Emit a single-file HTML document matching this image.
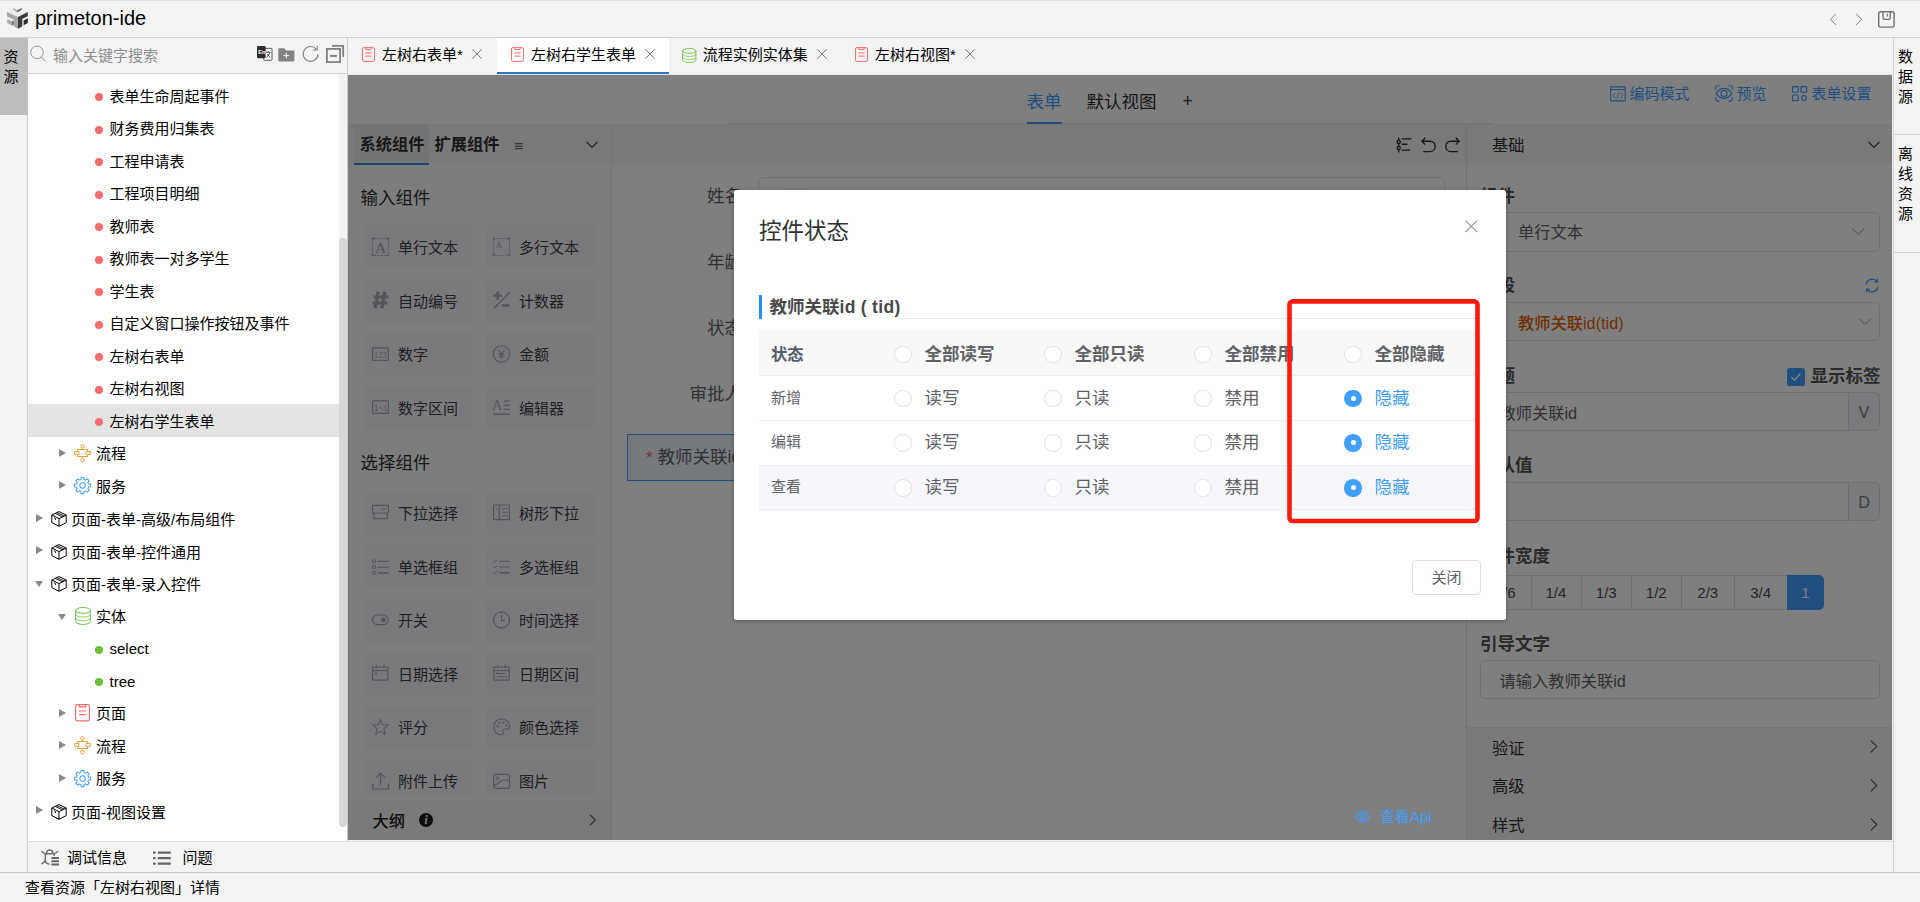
<!DOCTYPE html>
<html lang="zh-CN">
<head>
<meta charset="utf-8">
<title>primeton-ide</title>
<style>
*{box-sizing:border-box;margin:0;padding:0}
html,body{width:1920px;height:902px;overflow:hidden;background:#f3f3f3}
body{position:relative;font-family:"Liberation Sans","Noto Sans CJK SC",sans-serif;font-size:15px;color:#000;line-height:1}
.abs{position:absolute}
svg{display:block;position:absolute;overflow:visible}
.t{position:absolute;white-space:nowrap}
/* title */
#titlebar{left:0;top:0;width:1920px;height:38px;background:#f3f3f3;border-top:1px solid #e2e2e2;border-bottom:1px solid #d2d2d2}
#title{left:35px;top:5px;font-size:20px;line-height:24px;color:#000}
/* left strip */
#lstrip{left:0;top:38px;width:28px;height:835px;border-right:1px solid #d0d0d0;background:#f3f3f3}
#lstrip .sel{left:0;top:0;width:28px;height:77px;background:#bdbdbd}
.vtxt{position:absolute;width:15px;font-size:15px;line-height:20px;text-align:center;color:#000}
/* left panel */
#lpanel{left:28px;top:38px;width:320px;height:803px;background:#fff;border-right:1px solid #cacaca}
#search{left:0;top:0;width:319px;height:36px;background:#f3f3f3;border-bottom:1px solid #d4d4d4}
#tree{left:0;top:36px;width:311px;height:767px;overflow:hidden}
.row{position:absolute;left:0;width:311px;height:32.5px}
.row.on{background:#e4e4e4}
.row .t{top:8.5px;font-size:15px;line-height:17px}
.dot{position:absolute;width:8px;height:8px;border-radius:50%;top:13.75px}
.dot.r{background:#f56c6c}.dot.g{background:#67c23a}
.arr{position:absolute;width:0;height:0}
.arr.c{border-left:7px solid #8a8a8a;border-top:4.75px solid transparent;border-bottom:4.75px solid transparent;top:11.75px}
.arr.o{border-top:6.5px solid #8a8a8a;border-left:4.75px solid transparent;border-right:4.75px solid transparent;top:14.5px}
#sbar{left:311px;top:36px;width:8px;height:767px;background:#fff}
#sbar i{position:absolute;left:0;top:0;width:8px;height:170px;background:#f4f4f4}
#sbar b{position:absolute;left:0.2px;top:164px;width:7.4px;height:588.7px;background:#d7d7d7;border-radius:4px}
/* tabs */
#tabs{left:347px;top:38px;width:1546px;height:37px;background:#f3f3f3;border-left:1px solid #cacaca;border-bottom:1px solid #e4e4e4}
.tab{position:absolute;top:0;height:36px}
.tab.on{background:#fff;border-bottom:2px solid #2c75c5;height:36px}
.tab .t{top:7.5px;font-size:15px;line-height:17px}
/* main */
#main{left:348px;top:75px;width:1544px;height:765px;background:#fff;overflow:hidden}
#ov{left:0;top:0;width:1544px;height:765px;background:rgba(0,0,0,.5)}
.pbtn{position:absolute;width:108.5px;background:#f4f5fb;border-radius:5px;overflow:hidden}
.pbtn .t{font-size:15px;line-height:17px;color:#3e4046}
/* right strip */
#rstrip{left:1893px;top:38px;width:27px;height:835px;border-left:1px solid #d0d0d0;background:#f3f3f3}
/* bottom */
#bbar{left:28px;top:841px;width:1865px;height:32px;background:#f3f3f3;border-top:1px solid #dcdcdc}
#status{left:0;top:872px;width:1920px;height:30px;background:#f3f3f3;border-top:1px solid #c8c8c8}
</style>
</head>
<body>
<!-- TITLE BAR -->
<div id="titlebar" class="abs">
  <svg style="left:0;top:-1px" width="34" height="36" viewBox="0 0 34 36">
    <polygon points="7,12 17.5,6.6 27.8,12 18,17" fill="#ededed"/>
    <polygon points="13,8 17.3,10.2 17.3,12.7 13,9.3" fill="#b2b2b2"/>
    <polygon points="17.3,10.2 21.8,8 21.8,9.4 17.4,12.6" fill="#5e5e5e"/>
    <polygon points="7,12 18,17 18,28.7 13.7,26.3 13.7,19.7 7,16.4" fill="#a8a8a8"/>
    <polygon points="7.2,19 12.2,21.3 12.2,25.7 7.2,23" fill="#adadad"/>
    <polygon points="12.2,21.3 13.7,20.5 13.7,24.6 12.2,25.7" fill="#5c5c5c"/>
    <polygon points="18,17 27.8,12 27.8,16.3 22,19 22,26.4 18,28.7" fill="#3d3d3d"/>
    <polygon points="22,19.4 24,20.3 24,25.1 22,26.2" fill="#b4b4b4"/>
    <polygon points="24,20.3 27.8,18.3 27.8,23 24,25.1" fill="#2b2b2b"/>
  </svg>
  <div id="title" class="t">primeton-ide</div>
  <svg style="left:1828px;top:10px" width="70" height="18" viewBox="0 0 70 18" fill="none" stroke="#858585" stroke-width="1">
    <path d="M8 2.8 L2.4 8.4 L8 14"/>
    <path d="M28 2.8 L33.8 8.4 L28 14"/>
    <rect x="50.7" y="0.7" width="15.4" height="15.4" rx="2" stroke="#6e6e6e" stroke-width="1.4"/>
    <path d="M55 0.9 V7 Q55 8.4 56.4 8.4 H60.8 Q62.2 8.4 62.2 7 V0.9" stroke="#6e6e6e" stroke-width="1.3"/>
    <path d="M59.3 2.8 V5.6" stroke="#6e6e6e" stroke-width="1.1"/>
  </svg>
</div>

<!-- LEFT STRIP -->
<div id="lstrip" class="abs">
  <div class="sel abs"></div>
  <div class="vtxt" style="left:3.5px;top:9px">资源</div>
</div>

<!-- LEFT PANEL -->
<div id="lpanel" class="abs">
  <div id="search" class="abs">
    <svg style="left:2px;top:7px" width="18" height="18" viewBox="0 0 18 18" fill="none" stroke="#949494" stroke-width="1"><circle cx="7" cy="7.4" r="6.3"/><path d="M11.4 12 L15.8 16.6"/></svg>
    <div class="t" style="left:25px;top:8.5px;font-size:15px;line-height:17px;color:#8e8e8e">输入关键字搜索</div>
    <!-- translate -->
    <svg style="left:229px;top:8px" width="16" height="15" viewBox="0 0 16 15">
      <rect x="6.8" y="2.3" width="8.2" height="12" rx="0.8" fill="#fff" stroke="#444" stroke-width="0.9"/>
      <path d="M9 6.3 H13.4 M11.2 5 V6.3 M9.6 11.6 L12.8 6.8 M10 8 L13.4 11.8" stroke="#333" stroke-width="0.8" fill="none"/>
      <rect x="0" y="0" width="8.6" height="12.3" rx="1.2" fill="#2e2e2e"/>
      <text x="1.2" y="8" font-family="Liberation Sans,sans-serif" font-size="5.6" font-weight="bold" fill="#fff">En</text>
    </svg>
    <!-- folder add -->
    <svg style="left:250px;top:9.5px" width="17" height="14" viewBox="0 0 17 14">
      <path d="M0.3 1 Q0.3 0.3 1 0.3 H6 L8.2 2.6 H15.6 Q16.4 2.6 16.4 3.4 V12.6 Q16.4 13.4 15.6 13.4 H1 Q0.3 13.4 0.3 12.6 Z" fill="#828282"/>
      <path d="M8.3 4.8 V10.4 M5.5 7.6 H11.1" stroke="#fff" stroke-width="1"/>
    </svg>
    <!-- refresh -->
    <svg style="left:274px;top:7px" width="18" height="18" viewBox="0 0 18 18" fill="none" stroke="#808080" stroke-width="1.1">
      <path d="M16 9.2 A7.4 7.4 0 1 1 14.3 4.2"/>
      <path d="M15.2 0.8 V5 H10.8"/>
    </svg>
    <!-- collapse -->
    <svg style="left:297px;top:7px" width="20" height="19" viewBox="0 0 20 19" fill="none" stroke="#808080">
      <path d="M7 0.9 H18.2 V12" stroke-width="1.8"/>
      <rect x="1.9" y="3.9" width="13.2" height="13.2" stroke-width="1.8"/>
      <path d="M5 10.9 H12" stroke-width="2"/>
    </svg>
  </div>
  <div id="tree" class="abs">
    <div class="row" style="top:5.25px"><span class="dot r" style="left:67px"></span><span class="t" style="left:81.5px">表单生命周起事件</span></div>
    <div class="row" style="top:37.75px"><span class="dot r" style="left:67px"></span><span class="t" style="left:81.5px">财务费用归集表</span></div>
    <div class="row" style="top:70.25px"><span class="dot r" style="left:67px"></span><span class="t" style="left:81.5px">工程申请表</span></div>
    <div class="row" style="top:102.75px"><span class="dot r" style="left:67px"></span><span class="t" style="left:81.5px">工程项目明细</span></div>
    <div class="row" style="top:135.25px"><span class="dot r" style="left:67px"></span><span class="t" style="left:81.5px">教师表</span></div>
    <div class="row" style="top:167.75px"><span class="dot r" style="left:67px"></span><span class="t" style="left:81.5px">教师表一对多学生</span></div>
    <div class="row" style="top:200.25px"><span class="dot r" style="left:67px"></span><span class="t" style="left:81.5px">学生表</span></div>
    <div class="row" style="top:232.75px"><span class="dot r" style="left:67px"></span><span class="t" style="left:81.5px">自定义窗口操作按钮及事件</span></div>
    <div class="row" style="top:265.25px"><span class="dot r" style="left:67px"></span><span class="t" style="left:81.5px">左树右表单</span></div>
    <div class="row" style="top:297.75px"><span class="dot r" style="left:67px"></span><span class="t" style="left:81.5px">左树右视图</span></div>
    <div class="row on" style="top:330.25px"><span class="dot r" style="left:67px"></span><span class="t" style="left:81.5px">左树右学生表单</span></div>
    <div class="row" style="top:362.75px"><span class="arr c" style="left:31px"></span><svg style="left:45.7px;top:7px" width="17" height="19" viewBox="0 0 17 19" fill="none" stroke="#e6a23c" stroke-width="1"><circle cx="8.5" cy="2.3" r="1.7"/><path d="M8.5 4 V5.5 M8.5 12.5 V14.6"/><rect x="3.3" y="5.5" width="10.4" height="7"/><rect x="0.7" y="7.6" width="4.2" height="2.8" fill="#fff"/><rect x="12.1" y="7.6" width="4.2" height="2.8" fill="#fff"/><circle cx="8.5" cy="16.3" r="1.7"/></svg><span class="t" style="left:68px">流程</span></div>
    <div class="row" style="top:395.25px"><span class="arr c" style="left:31px"></span><svg style="left:46px;top:8px" width="17" height="17" viewBox="0 0 17 17" fill="none" stroke="#409eff" stroke-width="1.05" stroke-linejoin="round"><path d="M6.93 2.40 L7.22 0.40 L9.78 0.40 L10.07 2.40 L11.71 3.08 L13.32 1.87 L15.13 3.68 L13.92 5.29 L14.60 6.93 L16.60 7.22 L16.60 9.78 L14.60 10.07 L13.92 11.71 L15.13 13.32 L13.32 15.13 L11.71 13.92 L10.07 14.60 L9.78 16.60 L7.22 16.60 L6.93 14.60 L5.29 13.92 L3.68 15.13 L1.87 13.32 L3.08 11.71 L2.40 10.07 L0.40 9.78 L0.40 7.22 L2.40 6.93 L3.08 5.29 L1.87 3.68 L3.68 1.87 L5.29 3.08 Z"/><circle cx="8.5" cy="8.5" r="2.7"/></svg><span class="t" style="left:68px">服务</span></div>
    <div class="row" style="top:427.75px"><span class="arr c" style="left:8px"></span><svg style="left:22.5px;top:9.5px" width="16" height="16" viewBox="0 0 16 16" fill="none" stroke="#000" stroke-width="1" stroke-linejoin="round"><path d="M8 0.6 L15.2 4 V11.6 L8 15.3 L0.8 11.6 V4 Z"/><path d="M0.8 4 L8 7.6 L15.2 4 M8 7.6 V15.3"/><path d="M4.2 2.4 L11.6 5.9 M5.9 1.6 L13.3 5.1" stroke-width="0.9"/><path d="M3 6.8 L4.6 7.6 V9" stroke-width="0.9"/></svg><span class="t" style="top:9.5px;left:43px">页面-表单-高级/布局组件</span></div>
    <div class="row" style="top:460.25px"><span class="arr c" style="left:8px"></span><svg style="left:22.5px;top:9.5px" width="16" height="16" viewBox="0 0 16 16" fill="none" stroke="#000" stroke-width="1" stroke-linejoin="round"><path d="M8 0.6 L15.2 4 V11.6 L8 15.3 L0.8 11.6 V4 Z"/><path d="M0.8 4 L8 7.6 L15.2 4 M8 7.6 V15.3"/><path d="M4.2 2.4 L11.6 5.9 M5.9 1.6 L13.3 5.1" stroke-width="0.9"/><path d="M3 6.8 L4.6 7.6 V9" stroke-width="0.9"/></svg><span class="t" style="top:9.5px;left:43px">页面-表单-控件通用</span></div>
    <div class="row" style="top:492.75px"><span class="arr o" style="left:6.5px"></span><svg style="left:22.5px;top:9.5px" width="16" height="16" viewBox="0 0 16 16" fill="none" stroke="#000" stroke-width="1" stroke-linejoin="round"><path d="M8 0.6 L15.2 4 V11.6 L8 15.3 L0.8 11.6 V4 Z"/><path d="M0.8 4 L8 7.6 L15.2 4 M8 7.6 V15.3"/><path d="M4.2 2.4 L11.6 5.9 M5.9 1.6 L13.3 5.1" stroke-width="0.9"/><path d="M3 6.8 L4.6 7.6 V9" stroke-width="0.9"/></svg><span class="t" style="top:9.5px;left:43px">页面-表单-录入控件</span></div>
    <div class="row" style="top:525.25px"><span class="arr o" style="left:29.5px"></span><svg style="left:46.7px;top:8px" width="16" height="18" viewBox="0 0 16 18" preserveAspectRatio="none" fill="none" stroke="#67c23a" stroke-width="1"><ellipse cx="8" cy="3.4" rx="7.3" ry="2.9"/><path d="M0.7 3.4 V14.4 C0.7 16.2 4 17.4 8 17.4 C12 17.4 15.3 16.2 15.3 14.4 V3.4"/><path d="M0.7 7.2 C0.7 9 4 10.1 8 10.1 C12 10.1 15.3 9 15.3 7.2" stroke-opacity="0.75"/><path d="M0.7 10.9 C0.7 12.7 4 13.8 8 13.8 C12 13.8 15.3 12.7 15.3 10.9" stroke-opacity="0.75"/></svg><span class="t" style="left:68px">实体</span></div>
    <div class="row" style="top:557.75px"><span class="dot g" style="left:67px"></span><span class="t" style="left:81.5px">select</span></div>
    <div class="row" style="top:590.25px"><span class="dot g" style="left:67px"></span><span class="t" style="left:81.5px">tree</span></div>
    <div class="row" style="top:622.75px"><span class="arr c" style="left:31px"></span><svg style="left:47px;top:7.5px" width="15" height="17.75" viewBox="0 0 13 16" preserveAspectRatio="none" fill="none" stroke="#f56c6c" stroke-width="1"><rect x="0.5" y="0.6" width="12" height="14.6" rx="1.6"/><path d="M3.8 0.8 V2.6 H9.2 V0.8"/><path d="M3.3 6.3 H9.7 M3.3 9.6 H9.7"/></svg><span class="t" style="left:68px">页面</span></div>
    <div class="row" style="top:655.25px"><span class="arr c" style="left:31px"></span><svg style="left:45.7px;top:7px" width="17" height="19" viewBox="0 0 17 19" fill="none" stroke="#e6a23c" stroke-width="1"><circle cx="8.5" cy="2.3" r="1.7"/><path d="M8.5 4 V5.5 M8.5 12.5 V14.6"/><rect x="3.3" y="5.5" width="10.4" height="7"/><rect x="0.7" y="7.6" width="4.2" height="2.8" fill="#fff"/><rect x="12.1" y="7.6" width="4.2" height="2.8" fill="#fff"/><circle cx="8.5" cy="16.3" r="1.7"/></svg><span class="t" style="left:68px">流程</span></div>
    <div class="row" style="top:687.75px"><span class="arr c" style="left:31px"></span><svg style="left:46px;top:8px" width="17" height="17" viewBox="0 0 17 17" fill="none" stroke="#409eff" stroke-width="1.05" stroke-linejoin="round"><path d="M6.93 2.40 L7.22 0.40 L9.78 0.40 L10.07 2.40 L11.71 3.08 L13.32 1.87 L15.13 3.68 L13.92 5.29 L14.60 6.93 L16.60 7.22 L16.60 9.78 L14.60 10.07 L13.92 11.71 L15.13 13.32 L13.32 15.13 L11.71 13.92 L10.07 14.60 L9.78 16.60 L7.22 16.60 L6.93 14.60 L5.29 13.92 L3.68 15.13 L1.87 13.32 L3.08 11.71 L2.40 10.07 L0.40 9.78 L0.40 7.22 L2.40 6.93 L3.08 5.29 L1.87 3.68 L3.68 1.87 L5.29 3.08 Z"/><circle cx="8.5" cy="8.5" r="2.7"/></svg><span class="t" style="left:68px">服务</span></div>
    <div class="row" style="top:720.25px"><span class="arr c" style="left:8px"></span><svg style="left:22.5px;top:9.5px" width="16" height="16" viewBox="0 0 16 16" fill="none" stroke="#000" stroke-width="1" stroke-linejoin="round"><path d="M8 0.6 L15.2 4 V11.6 L8 15.3 L0.8 11.6 V4 Z"/><path d="M0.8 4 L8 7.6 L15.2 4 M8 7.6 V15.3"/><path d="M4.2 2.4 L11.6 5.9 M5.9 1.6 L13.3 5.1" stroke-width="0.9"/><path d="M3 6.8 L4.6 7.6 V9" stroke-width="0.9"/></svg><span class="t" style="top:9.5px;left:43px">页面-视图设置</span></div>
  </div>
  <div id="sbar" class="abs"><i></i><b></b></div>
</div>

<!--   <div class="tab" style="left:0px;width:149px"><svg style="left:14px;top:9px" width="13" height="15.2" viewBox="0 0 13 16" preserveAspectRatio="none" fill="none" stroke="#f56c6c" stroke-width="1"><rect x="0.5" y="0.6" width="12" height="14.6" rx="1.6"/><path d="M3.8 0.8 V2.6 H9.2 V0.8"/><path d="M3.3 6.3 H9.7 M3.3 9.6 H9.7"/></svg><span class="t" style="left:34px">左树右表单*</span><svg style="left:123.69999999999999px;top:11px" width="10" height="10" viewBox="0 0 10 10" stroke="#7a7a7a" stroke-width="1"><path d="M0.3 0.3 L9.7 9.7 M9.7 0.3 L0.3 9.7"/></svg></div>
  <div class="tab on" style="left:149px;width:172px"><svg style="left:14px;top:9px" width="13" height="15.2" viewBox="0 0 13 16" preserveAspectRatio="none" fill="none" stroke="#f56c6c" stroke-width="1"><rect x="0.5" y="0.6" width="12" height="14.6" rx="1.6"/><path d="M3.8 0.8 V2.6 H9.2 V0.8"/><path d="M3.3 6.3 H9.7 M3.3 9.6 H9.7"/></svg><span class="t" style="left:34px">左树右学生表单</span><svg style="left:147.5px;top:11px" width="10" height="10" viewBox="0 0 10 10" stroke="#7a7a7a" stroke-width="1"><path d="M0.3 0.3 L9.7 9.7 M9.7 0.3 L0.3 9.7"/></svg></div>
  <div class="tab" style="left:321px;width:172px"><svg style="left:13px;top:10px" width="14.5" height="15" viewBox="0 0 16 18" preserveAspectRatio="none" fill="none" stroke="#67c23a" stroke-width="1"><ellipse cx="8" cy="3.4" rx="7.3" ry="2.9"/><path d="M0.7 3.4 V14.4 C0.7 16.2 4 17.4 8 17.4 C12 17.4 15.3 16.2 15.3 14.4 V3.4"/><path d="M0.7 7.2 C0.7 9 4 10.1 8 10.1 C12 10.1 15.3 9 15.3 7.2" stroke-opacity="0.75"/><path d="M0.7 10.9 C0.7 12.7 4 13.8 8 13.8 C12 13.8 15.3 12.7 15.3 10.9" stroke-opacity="0.75"/></svg><span class="t" style="left:33.700000000000045px">流程实例实体集</span><svg style="left:147.5px;top:11px" width="10" height="10" viewBox="0 0 10 10" stroke="#7a7a7a" stroke-width="1"><path d="M0.3 0.3 L9.7 9.7 M9.7 0.3 L0.3 9.7"/></svg></div>
  <div class="tab" style="left:493px;width:149px"><svg style="left:14px;top:9px" width="13" height="15.2" viewBox="0 0 13 16" preserveAspectRatio="none" fill="none" stroke="#f56c6c" stroke-width="1"><rect x="0.5" y="0.6" width="12" height="14.6" rx="1.6"/><path d="M3.8 0.8 V2.6 H9.2 V0.8"/><path d="M3.3 6.3 H9.7 M3.3 9.6 H9.7"/></svg><span class="t" style="left:34px">左树右视图*</span><svg style="left:124px;top:11px" width="10" height="10" viewBox="0 0 10 10" stroke="#7a7a7a" stroke-width="1"><path d="M0.3 0.3 L9.7 9.7 M9.7 0.3 L0.3 9.7"/></svg></div> -->
<div id="tabs" class="abs">
  <div class="tab" style="left:0px;width:149px"><svg style="left:14px;top:9px" width="13" height="15.2" viewBox="0 0 13 16" preserveAspectRatio="none" fill="none" stroke="#f56c6c" stroke-width="1"><rect x="0.5" y="0.6" width="12" height="14.6" rx="1.6"/><path d="M3.8 0.8 V2.6 H9.2 V0.8"/><path d="M3.3 6.3 H9.7 M3.3 9.6 H9.7"/></svg><span class="t" style="left:34px">左树右表单*</span><svg style="left:123.69999999999999px;top:11px" width="10" height="10" viewBox="0 0 10 10" stroke="#7a7a7a" stroke-width="1"><path d="M0.3 0.3 L9.7 9.7 M9.7 0.3 L0.3 9.7"/></svg></div>
  <div class="tab on" style="left:149px;width:172px"><svg style="left:14px;top:9px" width="13" height="15.2" viewBox="0 0 13 16" preserveAspectRatio="none" fill="none" stroke="#f56c6c" stroke-width="1"><rect x="0.5" y="0.6" width="12" height="14.6" rx="1.6"/><path d="M3.8 0.8 V2.6 H9.2 V0.8"/><path d="M3.3 6.3 H9.7 M3.3 9.6 H9.7"/></svg><span class="t" style="left:34px">左树右学生表单</span><svg style="left:147.5px;top:11px" width="10" height="10" viewBox="0 0 10 10" stroke="#7a7a7a" stroke-width="1"><path d="M0.3 0.3 L9.7 9.7 M9.7 0.3 L0.3 9.7"/></svg></div>
  <div class="tab" style="left:321px;width:172px"><svg style="left:13px;top:10px" width="14.5" height="15" viewBox="0 0 16 18" preserveAspectRatio="none" fill="none" stroke="#67c23a" stroke-width="1"><ellipse cx="8" cy="3.4" rx="7.3" ry="2.9"/><path d="M0.7 3.4 V14.4 C0.7 16.2 4 17.4 8 17.4 C12 17.4 15.3 16.2 15.3 14.4 V3.4"/><path d="M0.7 7.2 C0.7 9 4 10.1 8 10.1 C12 10.1 15.3 9 15.3 7.2" stroke-opacity="0.75"/><path d="M0.7 10.9 C0.7 12.7 4 13.8 8 13.8 C12 13.8 15.3 12.7 15.3 10.9" stroke-opacity="0.75"/></svg><span class="t" style="left:33.700000000000045px">流程实例实体集</span><svg style="left:147.5px;top:11px" width="10" height="10" viewBox="0 0 10 10" stroke="#7a7a7a" stroke-width="1"><path d="M0.3 0.3 L9.7 9.7 M9.7 0.3 L0.3 9.7"/></svg></div>
  <div class="tab" style="left:493px;width:149px"><svg style="left:14px;top:9px" width="13" height="15.2" viewBox="0 0 13 16" preserveAspectRatio="none" fill="none" stroke="#f56c6c" stroke-width="1"><rect x="0.5" y="0.6" width="12" height="14.6" rx="1.6"/><path d="M3.8 0.8 V2.6 H9.2 V0.8"/><path d="M3.3 6.3 H9.7 M3.3 9.6 H9.7"/></svg><span class="t" style="left:34px">左树右视图*</span><svg style="left:124px;top:11px" width="10" height="10" viewBox="0 0 10 10" stroke="#7a7a7a" stroke-width="1"><path d="M0.3 0.3 L9.7 9.7 M9.7 0.3 L0.3 9.7"/></svg></div>
</div>

<!-- MAIN -->
<div id="main" class="abs">
  <div class="abs" id="mw" style="left:-348px;top:-75px;width:1920px;height:902px">
  <div class="abs" style="left:348px;top:74px;width:1545px;height:50px;background:#fff"></div>
  <div class="abs" style="left:729px;top:122.5px;width:763px;height:2px;background:#e4e7ed"></div>
  <div class="t" style="left:1026.5px;top:91.5px;font-size:17.5px;line-height:21px;color:#409eff">表单</div>
  <div class="abs" style="left:1026.5px;top:122px;width:35.5px;height:2.5px;background:#409eff"></div>
  <div class="t" style="left:1086.5px;top:91.5px;font-size:17.5px;line-height:21px;color:#303133">默认视图</div>
  <div class="t" style="left:1182.5px;top:91px;font-size:17.5px;line-height:21px;color:#303133">+</div>
  <svg style="left:1610px;top:85.5px" width="16" height="16" viewBox="0 0 16 16" fill="none" stroke="#409eff" stroke-width="1.1" ><rect x="0.6" y="0.9" width="14.6" height="14" rx="0.8"/><path d="M0.6 3.6 H15.2"/><path d="M5.2 7 L3.2 9.6 L5.2 12.2 M10.6 7 L12.6 9.6 L10.6 12.2 M8.8 6.4 L7 12.8" stroke-width="0.9"/></svg>
  <div class="t" style="left:1629.5px;top:85px;font-size:15px;line-height:17px;color:#409eff">编码模式</div>
  <svg style="left:1715px;top:85px" width="18" height="17" viewBox="0 0 18 17" fill="none" stroke="#409eff" stroke-width="1.15" ><path d="M1.2 8.4 C3.4 4.8 6 3.4 9 3.4 C12 3.4 14.6 4.8 16.8 8.4 C14.6 12 12 13.4 9 13.4 C6 13.4 3.4 12 1.2 8.4 Z"/><circle cx="9" cy="8.4" r="3"/><path d="M0.7 4.6 V2.6 Q0.7 0.7 2.6 0.7 H4.6 M13.4 0.7 H15.4 Q17.3 0.7 17.3 2.6 V4.6 M17.3 12.2 V14.2 Q17.3 16.1 15.4 16.1 H13.4 M4.6 16.1 H2.6 Q0.7 16.1 0.7 14.2 V12.2"/></svg>
  <div class="t" style="left:1736.5px;top:85px;font-size:15px;line-height:17px;color:#409eff">预览</div>
  <svg style="left:1792px;top:86px" width="16" height="16" viewBox="0 0 16 16" fill="none" stroke="#409eff" stroke-width="1.15" ><rect x="0.6" y="0.6" width="5.6" height="5.6" rx="0.4"/><rect x="9" y="0.6" width="5.6" height="5.6" rx="0.4"/><rect x="0.6" y="9" width="5.6" height="5.6" rx="0.4"/><circle cx="12" cy="12" r="2.4"/></svg>
  <div class="t" style="left:1811.5px;top:85px;font-size:15px;line-height:17px;color:#409eff">表单设置</div>
  <div class="abs" style="left:348px;top:124px;width:264px;height:716px;background:#fbfbfb;border-right:1px solid #e6e6e6"></div>
  <div class="abs" style="left:348px;top:124px;width:263px;height:40.5px;background:#f5f5f5;border-top:1px solid #ececec"></div>
  <div class="abs" style="left:354px;top:125px;width:75px;height:39.5px;background:#ebebeb;border-bottom:2.5px solid #3a84d6"></div>
  <div class="t" style="left:359.5px;top:133.5px;font-size:16.25px;line-height:20px;font-weight:bold;color:#303133">系统组件</div>
  <div class="t" style="left:434.5px;top:133.5px;font-size:16.25px;line-height:20px;font-weight:bold;color:#303133">扩展组件</div>
  <svg style="left:515.4px;top:143px" width="8" height="7" viewBox="0 0 8 7" fill="none" stroke="#4a4a4a" stroke-width="1.1" ><path d="M0 0.8 H7.8 M0 3.3 H7.8 M0 5.8 H7.8"/></svg>
  <svg style="left:586px;top:141.2px" width="12" height="8" viewBox="0 0 12 8" fill="none" stroke="#3a3a3a" stroke-width="1.2" ><path d="M0.5 0.8 L6 6.3 L11.5 0.8"/></svg>
  <div class="t" style="left:360.5px;top:187.6px;font-size:17.5px;line-height:21px;color:#303133">输入组件</div>
  <div class="pbtn" style="left:364px;top:224.9px;height:43.75px"><svg style="left:8px;top:12.8px" width="17" height="18" viewBox="0 0 17 18" fill="none" stroke="#a6aab2" stroke-width="1" ><rect x="0.5" y="0.5" width="16" height="17" stroke-dasharray="1.2 1.2"/><path d="M0.5 0.5h2M0.5 0.5v2M16.5 0.5h-2M16.5 0.5v2M0.5 17.5h2M0.5 17.5v-2M16.5 17.5h-2M16.5 17.5v-2" stroke-width="1.4"/><text x="8.5" y="14.6" text-anchor="middle" font-family="Liberation Serif,serif" font-size="15.5" fill="#a6aab2" stroke="none">A</text></svg><span class="t" style="left:34px;top:14px">单行文本</span></div>
  <div class="pbtn" style="left:486px;top:224.9px;height:43.75px"><svg style="left:7px;top:12.8px" width="17" height="18" viewBox="0 0 17 18" fill="none" stroke="#a6aab2" stroke-width="1" ><rect x="0.5" y="0.5" width="16" height="17" stroke-dasharray="1.2 1.2"/><path d="M0.5 0.5h2M0.5 0.5v2M16.5 0.5h-2M16.5 0.5v2M0.5 17.5h2M0.5 17.5v-2M16.5 17.5h-2M16.5 17.5v-2" stroke-width="1.4"/><text x="5.8" y="9.6" text-anchor="middle" font-family="Liberation Serif,serif" font-size="8.5" fill="#a6aab2" stroke="none">A</text></svg><span class="t" style="left:33px;top:14px">多行文本</span></div>
  <div class="pbtn" style="left:364px;top:278.65px;height:43.75px"><svg style="left:8px;top:12.2px" width="17" height="18" viewBox="0 0 17 18" fill="none" stroke="#a6aab2" stroke-width="1" ><path d="M6.2 0.8 L3.4 17.2 M12.6 0.8 L9.8 17.2" stroke-width="3.4"/><path d="M1.6 6 H16.6 M0.4 12 H15.4" stroke-width="3.2"/></svg><span class="t" style="left:34px;top:14px">自动编号</span></div>
  <div class="pbtn" style="left:486px;top:278.65px;height:43.75px"><svg style="left:7px;top:12.2px" width="17" height="18" viewBox="0 0 17 18" fill="none" stroke="#a6aab2" stroke-width="1" ><path d="M0.4 4.6 H9 M4.7 0.4 V8.8" stroke-width="2.5"/><path d="M1 17.2 L16.6 1.4" stroke-width="1.4"/><path d="M9 14.4 H16.8" stroke-width="2.5"/></svg><span class="t" style="left:33px;top:14px">计数器</span></div>
  <div class="pbtn" style="left:364px;top:332.4px;height:43.75px"><svg style="left:8px;top:12.2px" width="17" height="18" viewBox="0 0 17 18" fill="none" stroke="#a6aab2" stroke-width="1" ><rect x="0.6" y="2.8" width="15.8" height="12.6" rx="0.6" stroke-width="1.2"/><text x="8.5" y="12.6" text-anchor="middle" font-family="Liberation Sans,sans-serif" font-size="8.6" fill="#a6aab2" stroke="none" textLength="12.4" lengthAdjust="spacingAndGlyphs">123</text></svg><span class="t" style="left:34px;top:14px">数字</span></div>
  <div class="pbtn" style="left:486px;top:332.4px;height:43.75px"><svg style="left:7px;top:12.2px" width="17" height="18" viewBox="0 0 17 18" fill="none" stroke="#a6aab2" stroke-width="1" ><circle cx="8.5" cy="9" r="8.2" stroke-width="1.1"/><path d="M5.4 4.6 L8.5 9 L11.6 4.6 M8.5 9 V14 M5.6 9.4 H11.4 M5.6 11.8 H11.4" stroke-width="1.1"/></svg><span class="t" style="left:33px;top:14px">金额</span></div>
  <div class="pbtn" style="left:364px;top:386.15px;height:43.75px"><svg style="left:8px;top:12.2px" width="17" height="18" viewBox="0 0 17 18" fill="none" stroke="#a6aab2" stroke-width="1" ><rect x="0.6" y="2.8" width="15.8" height="12.6" rx="0.6" stroke-width="1.2"/><text x="8.5" y="12.6" text-anchor="middle" font-family="Liberation Sans,sans-serif" font-size="8.6" fill="#a6aab2" stroke="none" textLength="12.4" lengthAdjust="spacingAndGlyphs">1~3</text></svg><span class="t" style="left:34px;top:14px">数字区间</span></div>
  <div class="pbtn" style="left:486px;top:386.15px;height:43.75px"><svg style="left:7px;top:12.2px" width="17" height="18" viewBox="0 0 17 18" fill="none" stroke="#a6aab2" stroke-width="1" ><text x="4.2" y="12" text-anchor="middle" font-family="Liberation Serif,serif" font-size="14.5" fill="#a6aab2" stroke="none">A</text><path d="M10.6 3.2 H16.8 M10.6 7.4 H16.8 M10.6 11.4 H16.8" stroke-width="1.3"/><path d="M0.2 16.2 H16.8" stroke-width="1.5"/></svg><span class="t" style="left:33px;top:14px">编辑器</span></div>
  <div class="t" style="left:360.5px;top:453px;font-size:17.5px;line-height:21px;color:#303133">选择组件</div>
  <div class="pbtn" style="left:364px;top:491.75px;height:43.75px"><svg style="left:8px;top:11.4px" width="17" height="18" viewBox="0 0 17 18" fill="none" stroke="#a6aab2" stroke-width="1" ><rect x="0.6" y="2.4" width="15.8" height="7.6" rx="0.6" stroke-width="1.2"/><path d="M9.6 4.8 L11.9 7 L14.2 4.8" stroke-width="1"/><path d="M1.8 10 V15.6 H15.2 V10" stroke-width="1.2"/></svg><span class="t" style="left:34px;top:13.25px">下拉选择</span></div>
  <div class="pbtn" style="left:486px;top:491.75px;height:43.75px"><svg style="left:7px;top:11.7px" width="17" height="18" viewBox="0 0 17 18" fill="none" stroke="#a6aab2" stroke-width="1" ><rect x="0.6" y="2" width="15.8" height="14.6" rx="0.4" stroke-width="1.2"/><path d="M6.2 2 V16.6" stroke-width="1.2"/><path d="M9 5.8 H14.6 M9 9.3 H14.6 M9 12.8 H14.6" stroke-width="1.1"/><path d="M3 4.6 L4.4 5.7 L3 6.8 Z" fill="#a6aab2" stroke="none"/></svg><span class="t" style="left:33px;top:13.25px">树形下拉</span></div>
  <div class="pbtn" style="left:364px;top:545.35px;height:43.75px"><svg style="left:8px;top:12.2px" width="17" height="18" viewBox="0 0 17 18" fill="none" stroke="#a6aab2" stroke-width="1" ><circle cx="2" cy="3.2" r="1.6" stroke-width="0.9"/><circle cx="2" cy="9" r="1.6" stroke-width="0.9"/><circle cx="2" cy="14.8" r="1.6" stroke-width="0.9"/><path d="M5.6 3.4 H16.8 M5.6 9.2 H16.8" stroke-width="1.1"/><path d="M5.6 15 H16.8" stroke-width="1.6"/></svg><span class="t" style="left:34px;top:13.25px">单选框组</span></div>
  <div class="pbtn" style="left:486px;top:545.35px;height:43.75px"><svg style="left:7px;top:12.2px" width="17" height="18" viewBox="0 0 17 18" fill="none" stroke="#a6aab2" stroke-width="1" ><path d="M0.4 2.8 L1.8 4.2 L4.4 1.4 M0.4 8.6 L1.8 10 L4.4 7.2 M0.4 14.4 L1.8 15.8 L4.4 13" stroke-width="1"/><path d="M6.2 3.2 H16.8 M6.2 9 H16.8" stroke-width="1.1"/><path d="M6.2 14.8 H16.8" stroke-width="1.5"/></svg><span class="t" style="left:33px;top:13.25px">多选框组</span></div>
  <div class="pbtn" style="left:364px;top:598.95px;height:43.75px"><svg style="left:8px;top:12.2px" width="17" height="18" viewBox="0 0 17 18" fill="none" stroke="#a6aab2" stroke-width="1" ><rect x="0.6" y="4" width="15.8" height="9.6" rx="4.8" stroke-width="1.2"/><circle cx="11.6" cy="8.8" r="2.4" fill="#a6aab2" stroke="none"/></svg><span class="t" style="left:34px;top:13.25px">开关</span></div>
  <div class="pbtn" style="left:486px;top:598.95px;height:43.75px"><svg style="left:7px;top:12.2px" width="17" height="18" viewBox="0 0 17 18" fill="none" stroke="#a6aab2" stroke-width="1" ><circle cx="8.5" cy="9" r="8.1" stroke-width="1.1"/><path d="M8.5 4 V9.6 H12" stroke-width="1.1"/><path d="M8.5 1 V2.4 M8.5 15.6 V17 M0.6 9 H2 M15 9 H16.4" stroke-width="0.9"/></svg><span class="t" style="left:33px;top:13.25px">时间选择</span></div>
  <div class="pbtn" style="left:364px;top:652.55px;height:43.75px"><svg style="left:8px;top:11.8px" width="17" height="18" viewBox="0 0 17 18" fill="none" stroke="#a6aab2" stroke-width="1" ><rect x="0.6" y="3" width="15.2" height="13.2" rx="0.4" stroke-width="1.2"/><path d="M0.6 6.6 H15.8" stroke-width="1.1"/><path d="M4.4 0.8 V4.6 M12 0.8 V4.6" stroke-width="1.1"/><rect x="3" y="8.6" width="2" height="1.8" fill="#a6aab2" stroke="none"/></svg><span class="t" style="left:34px;top:13.25px">日期选择</span></div>
  <div class="pbtn" style="left:486px;top:652.55px;height:43.75px"><svg style="left:7px;top:11.8px" width="17" height="18" viewBox="0 0 17 18" fill="none" stroke="#a6aab2" stroke-width="1" ><rect x="0.9" y="3" width="15.2" height="13.2" rx="0.4" stroke-width="1.2"/><path d="M0.9 6.6 H16.1" stroke-width="1.1"/><path d="M4.7 0.8 V4.6 M12.3 0.8 V4.6" stroke-width="1.1"/><path d="M3.6 9.4 H12.6 M3.6 8.6 V10.2 M4.4 12.8 H13.4 M13.4 12 V13.6" stroke-width="1"/></svg><span class="t" style="left:33px;top:13.25px">日期区间</span></div>
  <div class="pbtn" style="left:364px;top:706.15px;height:43.75px"><svg style="left:8px;top:12.2px" width="17" height="18" viewBox="0 0 17 18" fill="none" stroke="#a6aab2" stroke-width="1" ><polygon points="8.50,1.40 10.56,6.77 16.30,7.07 11.83,10.68 13.32,16.23 8.50,13.10 3.68,16.23 5.17,10.68 0.70,7.07 6.44,6.77" stroke-width="1.1" stroke-linejoin="round"/></svg><span class="t" style="left:34px;top:13.25px">评分</span></div>
  <div class="pbtn" style="left:486px;top:706.15px;height:43.75px"><svg style="left:7px;top:12.2px" width="17" height="18" viewBox="0 0 17 18" fill="none" stroke="#a6aab2" stroke-width="1" ><path d="M8.6 1 C4.2 1 0.8 4.4 0.8 8.8 C0.8 13.2 4.2 16.9 8.4 16.9 C9.8 16.9 10.4 16.2 10.4 15.2 C10.4 14.2 9.6 13.8 9.6 12.8 C9.6 11.8 10.4 11.2 11.4 11.2 H13.6 C15.4 11.2 16.6 9.9 16.6 8.2 C16.6 4.2 13 1 8.6 1 Z" stroke-width="1.1"/><circle cx="4.6" cy="8.4" r="1.1" fill="#a6aab2" stroke="none"/><circle cx="6.6" cy="5" r="1.1" fill="#a6aab2" stroke="none"/><circle cx="10.6" cy="4.6" r="1.1" fill="#a6aab2" stroke="none"/><circle cx="13.4" cy="7.4" r="1.1" fill="#a6aab2" stroke="none"/></svg><span class="t" style="left:33px;top:13.25px">颜色选择</span></div>
  <div class="pbtn" style="left:364px;top:759.75px;height:35.5px"><svg style="left:8px;top:12.2px" width="17" height="18" viewBox="0 0 17 18" fill="none" stroke="#a6aab2" stroke-width="1" ><path d="M0.8 11.4 V17 H16.4 V11.4" stroke-width="1.2"/><path d="M8.6 13.2 V1.4 M4 5.8 L8.6 1.2 L13.2 5.8" stroke-width="1.2"/></svg><span class="t" style="left:34px;top:13.25px">附件上传</span></div>
  <div class="pbtn" style="left:486px;top:759.75px;height:35.5px"><svg style="left:7px;top:12.2px" width="17" height="18" viewBox="0 0 17 18" fill="none" stroke="#a6aab2" stroke-width="1" ><rect x="0.7" y="2.4" width="15.8" height="14" rx="1.8" stroke-width="1.2"/><circle cx="4.6" cy="6.4" r="1.4" stroke-width="1"/><path d="M0.8 13.6 C3.4 12.8 5 12 6.2 10.4 C7.8 8.2 11 7.2 16.4 8.6" stroke-width="1.1"/></svg><span class="t" style="left:33px;top:13.25px">图片</span></div>
  <div class="abs" style="left:348px;top:800.5px;width:263px;height:39.5px;background:#f5f5f5;border-top:1px solid #ededed"></div>
  <div class="t" style="left:372.5px;top:811px;font-size:16.25px;line-height:20px;font-weight:500;color:#1a1a1a">大纲</div>
  <div class="abs" style="left:419px;top:813px;width:14px;height:14px;border-radius:50%;background:#1a1a1a"></div>
  <div class="t" style="left:419px;top:813.5px;width:14px;text-align:center;font-family:'Liberation Serif',serif;font-style:italic;font-weight:bold;font-size:11.5px;line-height:13px;color:#fff">i</div>
  <svg style="left:589px;top:814px" width="8" height="12" viewBox="0 0 8 12" fill="none" stroke="#555" stroke-width="1.1" ><path d="M0.8 0.6 L6.4 6 L0.8 11.4"/></svg>
  <div class="abs" style="left:612px;top:124px;width:855px;height:40.5px;background:#f5f5f5;border-top:1px solid #ececec"></div>
  <svg style="left:1395.5px;top:137px" width="16" height="16" viewBox="0 0 16 16" fill="none" stroke="#2a2a2a" stroke-width="1.35" ><path d="M2.7 0.5 V15.5"/><circle cx="2.7" cy="4.9" r="1.6" fill="#f5f5f5"/><circle cx="2.7" cy="10.9" r="1.6" fill="#f5f5f5"/><path d="M5.6 1.9 H15.4 M5.6 7.2 H11.4 M5.6 13.1 H14"/></svg>
  <svg style="left:1420.5px;top:137px" width="16" height="16" viewBox="0 0 16 16" fill="none" stroke="#2a2a2a" stroke-width="1.35" ><path d="M4.2 0.8 L0.9 4.2 L4.2 7.6"/><path d="M0.9 4.2 H9 C12.2 4.2 14.2 6.6 14.2 9.4 C14.2 12.4 12 14.6 9 14.6 H2.2"/></svg>
  <svg style="left:1443.8px;top:137px" width="16" height="16" viewBox="0 0 16 16" fill="none" stroke="#2a2a2a" stroke-width="1.35" ><path d="M11.8 0.8 L15.1 4.2 L11.8 7.6"/><path d="M15.1 4.2 H7 C3.8 4.2 1.8 6.6 1.8 9.4 C1.8 12.4 4 14.6 7 14.6 H13.8"/></svg>
  <div class="t" style="left:600px;width:142px;text-align:right;top:185.5px;font-size:17.5px;line-height:21px;color:#606266">姓名</div>
  <div class="t" style="left:600px;width:142px;text-align:right;top:251.5px;font-size:17.5px;line-height:21px;color:#606266">年龄</div>
  <div class="t" style="left:600px;width:142px;text-align:right;top:317.5px;font-size:17.5px;line-height:21px;color:#606266">状态</div>
  <div class="t" style="left:600px;width:142px;text-align:right;top:383.5px;font-size:17.5px;line-height:21px;color:#606266">审批人</div>
  <div class="abs" style="left:758px;top:177px;width:687px;height:40px;border:1px solid #dcdfe6;border-radius:5px;background:#fff"></div>
  <div class="abs" style="left:758px;top:243px;width:687px;height:40px;border:1px solid #dcdfe6;border-radius:5px;background:#fff"></div>
  <div class="abs" style="left:758px;top:309px;width:687px;height:40px;border:1px solid #dcdfe6;border-radius:5px;background:#fff"></div>
  <div class="abs" style="left:758px;top:375px;width:687px;height:40px;border:1px solid #dcdfe6;border-radius:5px;background:#fff"></div>
  <div class="t" style="left:778px;top:187px;font-size:16.25px;line-height:20px;color:#c0c4cc">请输入</div>
  <div class="abs" style="left:627px;top:434px;width:830px;height:46.5px;border:1px solid #409eff;background:#ecf2fb"></div>
  <div class="t" style="left:646px;top:447.5px;font-size:17.5px;line-height:21px;color:#f56c6c">*</div>
  <div class="t" style="left:657.5px;top:446.5px;font-size:17.5px;line-height:21px;color:#606266">教师关联id</div>
  <div class="abs" style="left:1466px;top:124px;width:427px;height:716px;background:#fff;border-left:1px solid #e2e2e2"></div>
  <div class="abs" style="left:1467px;top:124px;width:426px;height:40.5px;background:#f5f5f5;border-top:1px solid #ececec"></div>
  <div class="t" style="left:1492px;top:135px;font-size:16.25px;line-height:20px;color:#303133">基础</div>
  <svg style="left:1868px;top:141px" width="12" height="8" viewBox="0 0 12 8" fill="none" stroke="#3a3a3a" stroke-width="1.2" ><path d="M0.5 0.8 L6 6.3 L11.5 0.8"/></svg>
  <div class="t" style="left:1480px;top:186.0px;font-size:17.5px;line-height:21px;font-weight:bold;color:#555">组件</div>
  <div class="abs" style="left:1480px;top:212px;width:400px;height:39.5px;border:1px solid #dcdfe6;border-radius:5px;background:#fff"></div>
  <div class="t" style="left:1518px;top:222px;font-size:16.25px;line-height:20px;color:#606266">单行文本</div>
  <svg style="left:1852px;top:228px" width="13" height="8" viewBox="0 0 13 8" fill="none" stroke="#c0c4cc" stroke-width="1.2" ><path d="M0.5 0.8 L6.3 6.4 L12.1 0.8"/></svg>
  <div class="t" style="left:1480px;top:274.5px;font-size:17.5px;line-height:21px;font-weight:bold;color:#555">字段</div>
  <svg style="left:1865px;top:277.5px" width="14" height="15" viewBox="0 0 14 15" fill="none" stroke="#409eff" stroke-width="1.3" ><path d="M1.2 6.4 A6 6 0 0 1 12 3.6 M12.4 0.8 V3.9 H9.3"/><path d="M12.8 8.6 A6 6 0 0 1 2 11.4 M1.6 14.2 V11.1 H4.7"/></svg>
  <div class="abs" style="left:1480px;top:302px;width:400px;height:39px;border:1px solid #dcdfe6;border-radius:5px;background:#fff"></div>
  <div class="t" style="left:1518px;top:313px;font-size:16.25px;line-height:20px;font-weight:500;color:#e0600a">教师关联id(tid)</div>
  <svg style="left:1859px;top:318px" width="13" height="8" viewBox="0 0 13 8" fill="none" stroke="#c0c4cc" stroke-width="1.2" ><path d="M0.5 0.8 L6.3 6.4 L12.1 0.8"/></svg>
  <div class="t" style="left:1480px;top:365.5px;font-size:17.5px;line-height:21px;font-weight:bold;color:#555">标题</div>
  <div class="abs" style="left:1787px;top:368px;width:17.5px;height:17.5px;border-radius:2.5px;background:#409eff"></div>
  <svg style="left:1787px;top:368px" width="18" height="18" viewBox="0 0 18 18" fill="none" stroke="#fff" stroke-width="1.5" ><path d="M4.2 9 L7.6 12.2 L13.4 5.6"/></svg>
  <div class="t" style="left:1810.5px;top:365.5px;font-size:17.5px;line-height:21px;font-weight:bold;color:#555">显示标签</div>
  <div class="abs" style="left:1480px;top:392px;width:400px;height:39px;border:1px solid #dcdfe6;border-radius:5px;background:#fff"></div>
  <div class="abs" style="left:1848px;top:392px;width:32px;height:39px;border:1px solid #dcdfe6;border-radius:0 5px 5px 0;background:#f5f7fa"></div>
  <div class="t" style="left:1848px;width:32px;text-align:center;top:402.5px;font-size:16.25px;line-height:19px;color:#7a7d84">V</div>
  <div class="t" style="left:1499.5px;top:402.5px;font-size:16.25px;line-height:20px;color:#606266">教师关联id</div>
  <div class="t" style="left:1480px;top:455.0px;font-size:17.5px;line-height:21px;font-weight:bold;color:#555">默认值</div>
  <div class="abs" style="left:1480px;top:482px;width:400px;height:39px;border:1px solid #dcdfe6;border-radius:5px;background:#fff"></div>
  <div class="abs" style="left:1848px;top:482px;width:32px;height:39px;border:1px solid #dcdfe6;border-radius:0 5px 5px 0;background:#f5f7fa"></div>
  <div class="t" style="left:1848px;width:32px;text-align:center;top:492.5px;font-size:16.25px;line-height:19px;color:#7a7d84">D</div>
  <div class="t" style="left:1480px;top:545.5px;font-size:17.5px;line-height:21px;font-weight:bold;color:#555">组件宽度</div>
  <div class="abs" style="left:1480px;top:575px;width:51.5px;height:34.5px;border:1px solid #dcdfe6;border-radius:5px 0 0 5px;background:#fff"></div>
  <div class="t" style="left:1480px;width:50.5px;text-align:center;top:584px;font-size:15px;line-height:17px;color:#4a4c52">1/6</div>
  <div class="abs" style="left:1530.5px;top:575px;width:51.75px;height:34.5px;border:1px solid #dcdfe6;border-radius:0;background:#fff"></div>
  <div class="t" style="left:1530.5px;width:50.75px;text-align:center;top:584px;font-size:15px;line-height:17px;color:#4a4c52">1/4</div>
  <div class="abs" style="left:1581.25px;top:575px;width:51.0px;height:34.5px;border:1px solid #dcdfe6;border-radius:0;background:#fff"></div>
  <div class="t" style="left:1581.25px;width:50.0px;text-align:center;top:584px;font-size:15px;line-height:17px;color:#4a4c52">1/3</div>
  <div class="abs" style="left:1631.25px;top:575px;width:51.0px;height:34.5px;border:1px solid #dcdfe6;border-radius:0;background:#fff"></div>
  <div class="t" style="left:1631.25px;width:50.0px;text-align:center;top:584px;font-size:15px;line-height:17px;color:#4a4c52">1/2</div>
  <div class="abs" style="left:1681.25px;top:575px;width:54.0px;height:34.5px;border:1px solid #dcdfe6;border-radius:0;background:#fff"></div>
  <div class="t" style="left:1681.25px;width:53.0px;text-align:center;top:584px;font-size:15px;line-height:17px;color:#4a4c52">2/3</div>
  <div class="abs" style="left:1734.25px;top:575px;width:53.75px;height:34.5px;border:1px solid #dcdfe6;border-radius:0;background:#fff"></div>
  <div class="t" style="left:1734.25px;width:52.75px;text-align:center;top:584px;font-size:15px;line-height:17px;color:#4a4c52">3/4</div>
  <div class="abs" style="left:1787px;top:575px;width:36.75px;height:34.5px;background:#409eff;border-radius:0 5px 5px 0"></div>
  <div class="t" style="left:1787px;width:36.75px;text-align:center;top:584px;font-size:15px;line-height:17px;color:#fff">1</div>
  <div class="t" style="left:1480px;top:634.0px;font-size:17.5px;line-height:21px;font-weight:bold;color:#555">引导文字</div>
  <div class="abs" style="left:1480px;top:660px;width:400px;height:39px;border:1px solid #dcdfe6;border-radius:5px;background:#fff"></div>
  <div class="t" style="left:1499.5px;top:671px;font-size:16.25px;line-height:20px;color:#606266">请输入教师关联id</div>
  <div class="abs" style="left:1467px;top:727.0px;width:426px;height:38.75px;background:#f5f5f5;border-top:1px solid #ededed"></div>
  <div class="t" style="left:1492px;top:737.5px;font-size:16.25px;line-height:20px;color:#303133">验证</div>
  <svg style="left:1870px;top:740.0px" width="8" height="13" viewBox="0 0 8 13" fill="none" stroke="#444" stroke-width="1.05" ><path d="M0.8 0.6 L6.8 6.5 L0.8 12.4"/></svg>
  <div class="abs" style="left:1467px;top:765.75px;width:426px;height:38.75px;background:#f5f5f5;border-top:1px solid #ededed"></div>
  <div class="t" style="left:1492px;top:776.25px;font-size:16.25px;line-height:20px;color:#303133">高级</div>
  <svg style="left:1870px;top:778.75px" width="8" height="13" viewBox="0 0 8 13" fill="none" stroke="#444" stroke-width="1.05" ><path d="M0.8 0.6 L6.8 6.5 L0.8 12.4"/></svg>
  <div class="abs" style="left:1467px;top:804.5px;width:426px;height:38.75px;background:#f5f5f5;border-top:1px solid #ededed"></div>
  <div class="t" style="left:1492px;top:815.0px;font-size:16.25px;line-height:20px;color:#303133">样式</div>
  <svg style="left:1870px;top:817.5px" width="8" height="13" viewBox="0 0 8 13" fill="none" stroke="#444" stroke-width="1.05" ><path d="M0.8 0.6 L6.8 6.5 L0.8 12.4"/></svg>
  </div>
  <div id="ov" class="abs"></div>
  <div class="abs" id="mw2" style="left:-348px;top:-75px;width:1920px;height:902px">
  <div class="abs" style="left:734px;top:190px;width:772px;height:430px;background:#fff;border-radius:2.5px;box-shadow:0 1px 4px rgba(0,0,0,.3)"></div>
  <div class="t" style="left:759px;top:217.5px;font-size:22.5px;line-height:27px;color:#303133">控件状态</div>
  <svg style="left:1465px;top:219.5px" width="13" height="13" viewBox="0 0 13 13" stroke="#909399" stroke-width="1.1"><path d="M0.4 0.4 L12.2 12.2 M12.2 0.4 L0.4 12.2"/></svg>
  <div class="abs" style="left:758.75px;top:295px;width:3.25px;height:23.75px;background:#1e90ff"></div>
  <div class="t" style="left:769.5px;top:297px;font-size:17.5px;line-height:21px;font-weight:bold;color:#4a4a4a">教师关联<span style="letter-spacing:0.3px">id ( tid)</span></div>
  <div class="abs" style="left:901px;top:317.5px;width:580px;height:1px;background:#e4e7ed"></div>
  <div class="abs" style="left:759px;top:331px;width:722px;height:44px;background:#f8f8f9"></div>
  <div class="abs" style="left:759px;top:466px;width:722px;height:43px;background:#f5f7fa"></div>
  <div class="abs" style="left:759px;top:375px;width:722px;height:1px;background:#e9ecf4"></div>
  <div class="abs" style="left:759px;top:420px;width:722px;height:1px;background:#e9ecf4"></div>
  <div class="abs" style="left:759px;top:465px;width:722px;height:1px;background:#e9ecf4"></div>
  <div class="abs" style="left:759px;top:509px;width:722px;height:1px;background:#e9ecf4"></div>
  <div class="t" style="left:771px;top:344px;font-size:16.25px;line-height:20px;font-weight:bold;color:#515a6e">状态</div>
  <div class="t" style="left:771px;top:388.5px;font-size:15px;line-height:18px;color:#606266">新增</div>
  <div class="t" style="left:771px;top:433.0px;font-size:15px;line-height:18px;color:#606266">编辑</div>
  <div class="t" style="left:771px;top:478.0px;font-size:15px;line-height:18px;color:#606266">查看</div>
  <div class="abs" style="left:894.25px;top:345.5px;width:17.5px;height:17.5px;border-radius:50%;background:#fff;border:1px solid #dcdfe6"></div>
  <div class="t" style="left:924.5px;top:343.5px;font-size:17.5px;line-height:21px;font-weight:bold;color:#606266">全部读写</div>
  <div class="abs" style="left:894.25px;top:389.5px;width:17.5px;height:17.5px;border-radius:50%;background:#fff;border:1px solid #dcdfe6"></div>
  <div class="t" style="left:924.5px;top:387.5px;font-size:17.5px;line-height:21px;color:#606266">读写</div>
  <div class="abs" style="left:894.25px;top:434.0px;width:17.5px;height:17.5px;border-radius:50%;background:#fff;border:1px solid #dcdfe6"></div>
  <div class="t" style="left:924.5px;top:432.0px;font-size:17.5px;line-height:21px;color:#606266">读写</div>
  <div class="abs" style="left:894.25px;top:479.0px;width:17.5px;height:17.5px;border-radius:50%;background:#fff;border:1px solid #dcdfe6"></div>
  <div class="t" style="left:924.5px;top:477.0px;font-size:17.5px;line-height:21px;color:#606266">读写</div>
  <div class="abs" style="left:1044.25px;top:345.5px;width:17.5px;height:17.5px;border-radius:50%;background:#fff;border:1px solid #dcdfe6"></div>
  <div class="t" style="left:1074.5px;top:343.5px;font-size:17.5px;line-height:21px;font-weight:bold;color:#606266">全部只读</div>
  <div class="abs" style="left:1044.25px;top:389.5px;width:17.5px;height:17.5px;border-radius:50%;background:#fff;border:1px solid #dcdfe6"></div>
  <div class="t" style="left:1074.5px;top:387.5px;font-size:17.5px;line-height:21px;color:#606266">只读</div>
  <div class="abs" style="left:1044.25px;top:434.0px;width:17.5px;height:17.5px;border-radius:50%;background:#fff;border:1px solid #dcdfe6"></div>
  <div class="t" style="left:1074.5px;top:432.0px;font-size:17.5px;line-height:21px;color:#606266">只读</div>
  <div class="abs" style="left:1044.25px;top:479.0px;width:17.5px;height:17.5px;border-radius:50%;background:#fff;border:1px solid #dcdfe6"></div>
  <div class="t" style="left:1074.5px;top:477.0px;font-size:17.5px;line-height:21px;color:#606266">只读</div>
  <div class="abs" style="left:1194.25px;top:345.5px;width:17.5px;height:17.5px;border-radius:50%;background:#fff;border:1px solid #dcdfe6"></div>
  <div class="t" style="left:1224.5px;top:343.5px;font-size:17.5px;line-height:21px;font-weight:bold;color:#606266">全部禁用</div>
  <div class="abs" style="left:1194.25px;top:389.5px;width:17.5px;height:17.5px;border-radius:50%;background:#fff;border:1px solid #dcdfe6"></div>
  <div class="t" style="left:1224.5px;top:387.5px;font-size:17.5px;line-height:21px;color:#606266">禁用</div>
  <div class="abs" style="left:1194.25px;top:434.0px;width:17.5px;height:17.5px;border-radius:50%;background:#fff;border:1px solid #dcdfe6"></div>
  <div class="t" style="left:1224.5px;top:432.0px;font-size:17.5px;line-height:21px;color:#606266">禁用</div>
  <div class="abs" style="left:1194.25px;top:479.0px;width:17.5px;height:17.5px;border-radius:50%;background:#fff;border:1px solid #dcdfe6"></div>
  <div class="t" style="left:1224.5px;top:477.0px;font-size:17.5px;line-height:21px;color:#606266">禁用</div>
  <div class="abs" style="left:1344.25px;top:345.5px;width:17.5px;height:17.5px;border-radius:50%;background:#fff;border:1px solid #dcdfe6"></div>
  <div class="t" style="left:1374.5px;top:343.5px;font-size:17.5px;line-height:21px;font-weight:bold;color:#606266">全部隐藏</div>
  <div class="abs" style="left:1344.25px;top:389.5px;width:17.5px;height:17.5px;border-radius:50%;background:#409eff"></div>
  <div class="abs" style="left:1350.5px;top:395.75px;width:5px;height:5px;border-radius:50%;background:#fff"></div>
  <div class="t" style="left:1374.5px;top:387.5px;font-size:17.5px;line-height:21px;color:#409eff">隐藏</div>
  <div class="abs" style="left:1344.25px;top:434.0px;width:17.5px;height:17.5px;border-radius:50%;background:#409eff"></div>
  <div class="abs" style="left:1350.5px;top:440.25px;width:5px;height:5px;border-radius:50%;background:#fff"></div>
  <div class="t" style="left:1374.5px;top:432.0px;font-size:17.5px;line-height:21px;color:#409eff">隐藏</div>
  <div class="abs" style="left:1344.25px;top:479.0px;width:17.5px;height:17.5px;border-radius:50%;background:#409eff"></div>
  <div class="abs" style="left:1350.5px;top:485.25px;width:5px;height:5px;border-radius:50%;background:#fff"></div>
  <div class="t" style="left:1374.5px;top:477.0px;font-size:17.5px;line-height:21px;color:#409eff">隐藏</div>
  <svg style="left:1355px;top:810.5px" width="15" height="11.5" viewBox="0 0 15 11.5" fill="none" stroke="#409eff" stroke-width="1.2"><path d="M0.7 5.75 C2.8 2.2 5 0.8 7.5 0.8 C10 0.8 12.2 2.2 14.3 5.75 C12.2 9.3 10 10.7 7.5 10.7 C5 10.7 2.8 9.3 0.7 5.75 Z"/><circle cx="7.5" cy="5.75" r="2.6"/></svg>
  <div class="t" style="left:1380px;top:807.5px;font-size:15px;line-height:17px;color:#409eff">查看Api</div>
  <svg style="left:1280px;top:295px" width="210" height="235" viewBox="0 0 210 235" fill="none" stroke="#ff1a0e" stroke-width="4.6"><rect x="9.5" y="6.4" width="188" height="219.6" rx="3.2"/></svg>
  <div class="abs" style="left:1412px;top:560px;width:69px;height:35px;border:1px solid #dcdfe6;border-radius:4px;background:#fff"></div>
  <div class="t" style="left:1412px;width:69px;text-align:center;top:569px;font-size:15px;line-height:18px;color:#606266">关闭</div>
  </div>
</div>

<!-- RIGHT STRIP -->
<div id="rstrip" class="abs">
  <div class="vtxt" style="left:4px;top:8.6px">数据源</div>
  <div class="abs" style="left:0;top:96px;width:26px;height:1px;background:#d0d0d0"></div>
  <div class="vtxt" style="left:4px;top:106.2px">离线资源</div>
  <div class="abs" style="left:0;top:214px;width:26px;height:1px;background:#d0d0d0"></div>
</div>

<!-- BOTTOM BAR -->
<div id="bbar" class="abs">
  <svg style="left:13px;top:7px" width="19" height="17" viewBox="0 0 19 18" preserveAspectRatio="none" fill="none" stroke="#6e6e6e" stroke-width="1.5" stroke-linecap="round" stroke-linejoin="round"><path d="M5.6 4.4 C5.6 2.2 7 1 8.7 1 C10.4 1 11.8 2.2 11.8 4.4"/><path d="M0.8 2.6 L4 5 H13.4 L16.8 2.6"/><path d="M4.3 5.2 V11.4 C4.3 14.2 6 15.8 8.2 16"/><path d="M13.2 5.2 V7"/><path d="M4.3 12.4 L0.9 15.6"/><path d="M10.4 9.6 H18 M10.4 13 H18 M10.4 16.4 H18" stroke-width="2.1" stroke-linecap="butt" stroke="#666"/></svg>
  <div class="t" style="left:39px;top:6.5px;font-size:15px;line-height:17px;color:#000">调试信息</div>
  <svg style="left:125.4px;top:9.4px" width="19" height="14" viewBox="0 0 19 14" fill="none" stroke="#666" stroke-width="2.3"><path d="M0 1.6 H2.6 M4.8 1.6 H17.8 M0 7.1 H2.6 M4.8 7.1 H17.8 M0 12.6 H2.6 M4.8 12.6 H17.8"/></svg>
  <div class="t" style="left:154.5px;top:6.5px;font-size:15px;line-height:17px;color:#000">问题</div>
</div>
<div id="status" class="abs">
  <div class="t" style="left:25px;top:6.25px;font-size:15px;line-height:17px;color:#000">查看资源「左树右视图」详情</div>
</div>
</body>
</html>
